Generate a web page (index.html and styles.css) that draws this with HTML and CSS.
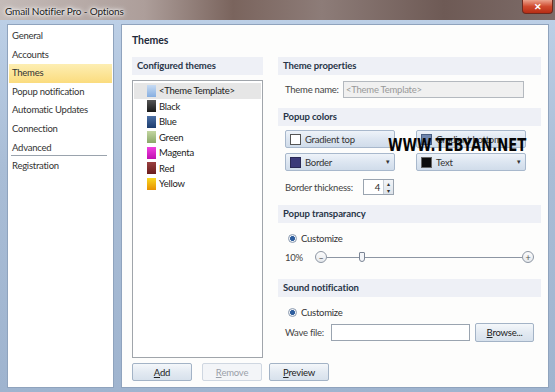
FILE: index.html
```html
<!DOCTYPE html>
<html>
<head>
<meta charset="utf-8">
<link rel="stylesheet" href="styles.css">
</head>
<body>
<div class="window">
  <div class="titlebar">
    <span class="title">Gmail Notifier Pro - Options</span>
    <span class="close">&#x2715;</span>
  </div>
  <div class="frame">
    <div class="nav">
      <div class="nav-item">General</div>
      <div class="nav-item">Accounts</div>
      <div class="nav-item active">Themes</div>
      <div class="nav-item">Popup notification</div>
      <div class="nav-item">Automatic Updates</div>
      <div class="nav-item">Connection</div>
      <div class="nav-item">Advanced</div>
      <div class="nav-sep"></div>
      <div class="nav-item">Registration</div>
    </div>
    <div class="content">
      <div class="page-title">Themes</div>
      <div class="cols">
        <div class="left">
          <div class="band">Configured themes</div>
          <div class="list">
            <div class="li sel"><span class="sw sw-tpl"></span>&lt;Theme Template&gt;</div>
            <div class="li"><span class="sw sw-black"></span>Black</div>
            <div class="li"><span class="sw sw-blue"></span>Blue</div>
            <div class="li"><span class="sw sw-green"></span>Green</div>
            <div class="li"><span class="sw sw-magenta"></span>Magenta</div>
            <div class="li"><span class="sw sw-red"></span>Red</div>
            <div class="li"><span class="sw sw-yellow"></span>Yellow</div>
          </div>
          <div class="btn-row">
            <div class="btn"><u>A</u>dd</div>
            <div class="btn disabled"><u>R</u>emove</div>
            <div class="btn"><u>P</u>review</div>
          </div>
        </div>
        <div class="right">
          <div class="band">Theme properties</div>
          <div class="row name-row">
            <span class="lbl">Theme name:</span>
            <div class="input gray">&lt;Theme Template&gt;</div>
          </div>
          <div class="band">Popup colors</div>
          <div class="color-grid">
            <div class="cbtn"><span class="csw csw-white"></span>Gradient top</div>
            <div class="cbtn"><span class="csw csw-grad"></span>Gradient bottom</div>
            <div class="cbtn"><span class="csw csw-border"></span>Border<span class="arrow">&#9662;</span></div>
            <div class="cbtn"><span class="csw csw-black"></span>Text<span class="arrow">&#9662;</span></div>
          </div>
          <div class="row thick-row">
            <span class="lbl">Border thickness:</span>
            <div class="spin"><span class="spin-val">4</span><span class="spin-btns"><span>&#9652;</span><span>&#9662;</span></span></div>
          </div>
          <div class="band">Popup transparancy</div>
          <div class="radio-row"><span class="radio"></span>Customize</div>
          <div class="slider-row">
            <span class="lbl">10%</span>
            <span class="circ">&#8211;</span>
            <span class="track"><span class="thumb"></span></span>
            <span class="circ">+</span>
          </div>
          <div class="band">Sound notification</div>
          <div class="radio-row"><span class="radio"></span>Customize</div>
          <div class="row wave-row">
            <span class="lbl">Wave file:</span>
            <div class="input wave"></div>
            <div class="btn browse"><u>B</u>rowse...</div>
          </div>
        </div>
      </div>
    </div>
  </div>
  <div class="watermark">WWW.TEBYAN.NET</div>
</div>
</body>
</html>
```
FILE: styles.css
```css
* { box-sizing: border-box; }
html, body { margin: 0; padding: 0; }
body {
  width: 555px; height: 392px; overflow: hidden;
  font-family: "Lato", "Noto Sans", sans-serif;
  font-size: 9.5px; letter-spacing: -0.25px; color: #2a2a2a;
}
.window {
  position: relative;
  width: 555px; height: 392px;
  display: flex; flex-direction: column;
  background: #a9bdd6;
}
.titlebar {
  height: 20px; flex: none;
  display: flex; align-items: center; justify-content: space-between;
  padding-left: 5px;
  background: linear-gradient(90deg, #c4bbb8 0%, #ad9e9a 26%, #7a645d 42%, #8d7c78 58%, #6e5a55 80%, #7d6c69 100%);
}
.title {
  font-size: 10px; letter-spacing: -0.15px; color: #1b1b1b;
  text-shadow: 0 0 6px #fff, 0 0 4px #fff, 0 0 2px #fff;
  padding-top: 1px;
}
.close {
  align-self: flex-start;
  width: 31px; height: 14px; margin-right: 2px;
  background: linear-gradient(#eba38d, #d04a2e 50%, #b72d15);
  border: 1px solid #6d2a1f; border-top: none;
  border-radius: 0 0 4px 4px;
  color: #fff; font-size: 9px; font-weight: bold; letter-spacing: 0;
  display: flex; align-items: center; justify-content: center;
}
.frame {
  flex: 1; display: flex; gap: 7px;
  padding: 4px 6px 4px 7px;
  background: linear-gradient(#bccfe6, #a9bdd6 40%, #9fb4cf);
  min-width: 0;
}
.nav {
  width: 107px; flex: none;
  background: #fff; border: 1px solid #8fa3bd;
  padding-top: 2px;
}
.nav-item {
  height: 18.6px; line-height: 18.6px;
  padding-left: 4px; color: #333;
}
.nav-item.active {
  background: linear-gradient(#fdeeb3, #fbdc7e);
  margin: 0 1px;
  padding-left: 3px;
}
.nav-sep { height: 1px; background: #9aa3ad; margin: -2px 6px 1px 3px; }
.content {
  flex: 1; min-width: 0; background: #fdfdfc; border: 1px solid #8fa3bd;
  padding: 7px 8px 0 10px;
}
.page-title { font-weight: bold; font-size: 10.5px; letter-spacing: -0.1px; color: #1e2a3a; height: 16px; line-height: 16px; }
.cols { display: flex; gap: 15px; margin-top: 9px; }
.left { width: 131px; flex: none; display: flex; flex-direction: column; }
.right { width: 263px; flex: none; display: flex; flex-direction: column; }
.band {
  height: 18px; line-height: 18px;
  background: #eef0f6; font-weight: bold; color: #283548;
  padding-left: 5px; letter-spacing: -0.1px;
}
.list {
  margin-top: 5px; height: 278px;
  border: 1px solid #a0a5ab; background: #fff;
  padding: 2px 1px;
}
.li {
  height: 15.5px; display: flex; align-items: center;
  padding-left: 13px; color: #222;
}
.li.sel { background: #e6e6e6; }
.sw { width: 9px; height: 12px; margin-right: 3px; flex: none; }
.sw-tpl { background: linear-gradient(#c6dbf4, #86aee0); }
.sw-black { background: linear-gradient(#555, #1a1a1a); }
.sw-blue { background: linear-gradient(#4b6fa5, #1d3d6e); }
.sw-green { background: linear-gradient(#c3d6a0, #8aa868); }
.sw-magenta { background: linear-gradient(#f040e0, #c010b0); }
.sw-red { background: linear-gradient(#9a4040, #6a1c1c); }
.sw-yellow { background: linear-gradient(#f8d820, #e89000); }
.btn-row { display: flex; margin-top: 5px; }
.btn {
  width: 60px; height: 18px; flex: none;
  border: 1px solid #a3b3c6; border-radius: 2px;
  background: linear-gradient(#f4f7fa, #e3eaf2 50%, #d7e1ec);
  display: flex; align-items: center; justify-content: center;
  color: #222;
}
.btn-row .btn + .btn { margin-left: 10px; }
.btn-row .btn:last-child { margin-left: 7px; }
.btn.disabled { color: #9aa0a8; background: #f3f5f8; border-color: #cfd7e1; }
.row { display: flex; align-items: center; padding-left: 7px; }
.lbl { color: #444; flex: none; white-space: nowrap; }
.name-row { height: 22px; margin-top: 3px; margin-bottom: 8px; }
.name-row .lbl { width: 58px; }
.input {
  height: 17px; border: 1px solid #9aa4b0; background: #fff;
  display: flex; align-items: center; padding-left: 2px;
}
.input.gray { width: 181px; background: #f0f0f0; color: #999; border-color: #b4b9bf; }
.color-grid {
  display: grid; grid-template-columns: 110px 110px; column-gap: 21px; row-gap: 5px;
  padding-left: 7px; margin-top: 4px;
}
.cbtn {
  height: 18px; position: relative;
  border: 1px solid #a8b8cc; border-radius: 2px;
  background: linear-gradient(#eef3f9, #dde6f1 50%, #d0dcea);
  display: flex; align-items: center; padding-left: 4px; color: #333;
}
.csw { width: 11px; height: 11px; margin-right: 4px; border: 1px solid #666; flex: none; }
.csw-white { background: #fff; border-color: #555; }
.csw-grad { background: #6f86ad; border-color: #4a5f82; }
.csw-border { background: #3b3a79; border-color: #2a2955; }
.csw-black { background: #0c0c0c; }
.arrow { position: absolute; right: 4px; top: 3px; font-size: 7px; color: #333; }
.thick-row { height: 16px; margin-top: 8px; margin-bottom: 10px; }
.thick-row .lbl { width: 78px; }
.spin {
  width: 31px; height: 16px; border: 1px solid #9aa4b0; background: #fff;
  display: flex; align-items: center; justify-content: flex-end;
}
.spin-val { padding-right: 3px; }
.spin-btns {
  width: 10px; height: 14px; display: flex; flex-direction: column;
  border-left: 1px solid #c5ccd4; background: linear-gradient(#f3f5f8, #dde3ea);
  font-size: 6px; line-height: 7px; text-align: center; color: #333;
}
.radio-row { display: flex; align-items: center; height: 14px; margin-top: 8px; padding-left: 10px; color: #333; }
.radio {
  width: 9px; height: 9px; border-radius: 50%; border: 1px solid #8c9bb0;
  background: radial-gradient(circle, #2e5e9e 0 2.2px, #eef2f7 2.6px);
  margin-right: 4px;
}
.slider-row { display: flex; align-items: center; height: 14px; margin-top: 5px; padding-left: 7px; margin-bottom: 15px; }
.slider-row .lbl { width: 30px; }
.circ {
  width: 12px; height: 12px; border-radius: 50%; border: 1px solid #8d96a3;
  background: linear-gradient(#fdfdfd, #e5e8ec);
  display: flex; align-items: center; justify-content: center;
  font-size: 9px; line-height: 1; color: #555; flex: none;
}
.track { width: 195px; height: 1px; background: #8d96a3; position: relative; flex: none; }
.thumb {
  position: absolute; left: 32px; top: -5px; width: 6px; height: 10px;
  border: 1px solid #7b8595; background: #f3f5f8; border-radius: 1px 1px 3px 3px;
}
.wave-row { height: 20px; margin-top: 3px; }
.wave-row .lbl { width: 46px; }
.input.wave { width: 139px; flex: none; }
.browse { margin-left: 5px; width: 59px; height: 19px; }
.watermark {
  position: absolute; left: 388px; top: 135px;
  font-family: "DejaVu Sans", sans-serif; font-weight: bold;
  font-size: 14px; letter-spacing: 0; color: #050505;
  transform: scale(0.94, 1.3); transform-origin: 0 0;
  line-height: 14px;
}
```
